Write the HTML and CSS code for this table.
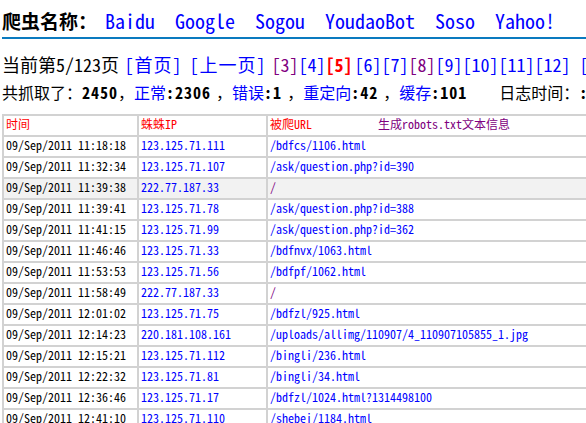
FILE: index.html
```html
<!DOCTYPE html>
<html lang="zh-CN">
<head>
<meta charset="utf-8">
<title>爬虫记录</title>
<link rel="stylesheet" href="styles.css">
</head>
<body>
<div class="page">
  <div class="bots">
    <span class="label">爬虫名称：</span>
    <a class="bot" href="#">Baidu</a>
    <a class="bot" href="#">Google</a>
    <a class="bot" href="#">Sogou</a>
    <a class="bot" href="#">YoudaoBot</a>
    <a class="bot" href="#">Soso</a>
    <a class="bot" href="#">Yahoo!</a>
  </div>

  <div class="pager">
    <span class="cur">当前第5/123页</span>
    <a class="pl first" href="#">[首页]</a>
    <a class="pl prev" href="#">[上一页]</a>
    <a class="pn visited start" href="#">[3]</a>
    <a class="pn" href="#">[4]</a>
    <a class="pn active" href="#">[5]</a>
    <a class="pn" href="#">[6]</a>
    <a class="pn" href="#">[7]</a>
    <a class="pn visited" href="#">[8]</a>
    <a class="pn" href="#">[9]</a>
    <a class="pn" href="#">[10]</a>
    <a class="pn" href="#">[11]</a>
    <a class="pn" href="#">[12]</a>
    <a class="pl next" href="#">[下一页]</a>
  </div>

  <div class="stats">
    <span>共抓取了：</span><b class="num">2450</b><span>，</span><span class="blue">正常</span><b class="num">:2306</b><span class="sep">，</span><span class="blue">错误</span><b class="num">:1</b><span class="sep">，</span><span class="blue">重定向</span><b class="num">:42</b><span class="sep">，</span><span class="blue">缓存</span><b class="num">:101</b><span class="logtime">日志时间：</span><b class="num">:2011-09-09</b>
  </div>

  <table class="log">
    <tr class="head">
      <td class="c1">时间</td>
      <td class="c2">蛛蛛IP</td>
      <td class="c3">被爬URL<span class="gen">生成robots.txt文本信息</span></td>
    </tr>
    <tr><td>09/Sep/2011 11:18:18</td><td><a href="#">123.125.71.111</a></td><td><a href="#">/bdfcs/1106.html</a></td></tr>
    <tr><td>09/Sep/2011 11:32:34</td><td><a href="#">123.125.71.107</a></td><td><a href="#">/ask/question.php?id=390</a></td></tr>
    <tr class="hl"><td>09/Sep/2011 11:39:38</td><td><a href="#">222.77.187.33</a></td><td><a class="visited" href="#">/</a></td></tr>
    <tr><td>09/Sep/2011 11:39:41</td><td><a href="#">123.125.71.78</a></td><td><a href="#">/ask/question.php?id=388</a></td></tr>
    <tr><td>09/Sep/2011 11:41:15</td><td><a href="#">123.125.71.99</a></td><td><a href="#">/ask/question.php?id=362</a></td></tr>
    <tr><td>09/Sep/2011 11:46:46</td><td><a href="#">123.125.71.33</a></td><td><a href="#">/bdfnvx/1063.html</a></td></tr>
    <tr><td>09/Sep/2011 11:53:53</td><td><a href="#">123.125.71.56</a></td><td><a href="#">/bdfpf/1062.html</a></td></tr>
    <tr><td>09/Sep/2011 11:58:49</td><td><a href="#">222.77.187.33</a></td><td><a class="visited" href="#">/</a></td></tr>
    <tr><td>09/Sep/2011 12:01:02</td><td><a href="#">123.125.71.75</a></td><td><a href="#">/bdfzl/925.html</a></td></tr>
    <tr><td>09/Sep/2011 12:14:23</td><td><a href="#">220.181.108.161</a></td><td><a href="#">/uploads/allimg/110907/4_110907105855_1.jpg</a></td></tr>
    <tr><td>09/Sep/2011 12:15:21</td><td><a href="#">123.125.71.112</a></td><td><a href="#">/bingli/236.html</a></td></tr>
    <tr><td>09/Sep/2011 12:22:32</td><td><a href="#">123.125.71.81</a></td><td><a href="#">/bingli/34.html</a></td></tr>
    <tr><td>09/Sep/2011 12:36:46</td><td><a href="#">123.125.71.17</a></td><td><a href="#">/bdfzl/1024.html?1314498100</a></td></tr>
    <tr><td>09/Sep/2011 12:41:10</td><td><a href="#">123.125.71.110</a></td><td><a href="#">/shebei/1184.html</a></td></tr>
  </table>
</div>
</body>
</html>
```

FILE: styles.css
```css
html, body {
  margin: 0;
  padding: 0;
  background: #fff;
  overflow: hidden;
}

body {
  width: 586px;
  height: 423px;
}

.page {
  padding-left: 2px;
  font-family: "Noto Sans Mono CJK SC", "Liberation Mono", "Noto Sans CJK SC", monospace;
  color: #000;
  white-space: nowrap;
}

a {
  color: #0000ff;
  text-decoration: none;
}

a.visited {
  color: #800080;
}

/* ---------- crawler names ---------- */
.bots {
  display: flex;
  align-items: baseline;
  gap: 20px;
  height: 26px;
  padding-top: 11px;
  font-size: 20px;
  line-height: 20px;
  border-bottom: 2px solid #0a7abf;
}

.bots .label {
  font-size: 19px;
  font-weight: bold;
  width: 83px;
}

/* ---------- pager ---------- */
.pager {
  display: flex;
  margin-top: 11px;
  font-size: 18px;
  line-height: 28px;
}

.pl {
  letter-spacing: 1px;
}

.pl.first { margin-left: 5.5px; }
.pl.prev { margin-left: 7px; }
.pl.next { margin-left: 9px; }

.pn.start { margin-left: 5px; }

.pn.active {
  color: #ff0000;
  font-weight: bold;
  margin-right: 2px;
}

/* ---------- stats ---------- */
.stats {
  display: flex;
  font-size: 16px;
  line-height: 28px;
}

.stats .num {
  letter-spacing: 1px;
}

.stats .blue {
  color: #0000ff;
}

.stats .sep {
  width: 18px;
  padding-left: 5px;
}

.stats .logtime {
  margin-left: 32px;
}

/* ---------- log table ---------- */
.log {
  margin-top: 8px;
  width: 760px;
  table-layout: fixed;
  border-collapse: separate;
  border-spacing: 0;
  border-top: 2px solid #d2d2d2;
  border-left: 2px solid #d2d2d2;
  font-size: 12px;
}

.log td {
  box-sizing: border-box;
  height: 21px;
  padding: 0 0 0 2px;
  line-height: 15px;
  border-right: 2px solid #d2d2d2;
  border-bottom: 2px solid #d2d2d2;
  overflow: hidden;
  vertical-align: top;
}

.log .c1 { width: 135px; }
.log .c2 { width: 129px; }

.log .head td {
  color: #ff0000;
}

.log .gen {
  color: #800080;
  margin-left: 66px;
}

.log tr.hl td {
  background: #f2f2f2;
}
```
